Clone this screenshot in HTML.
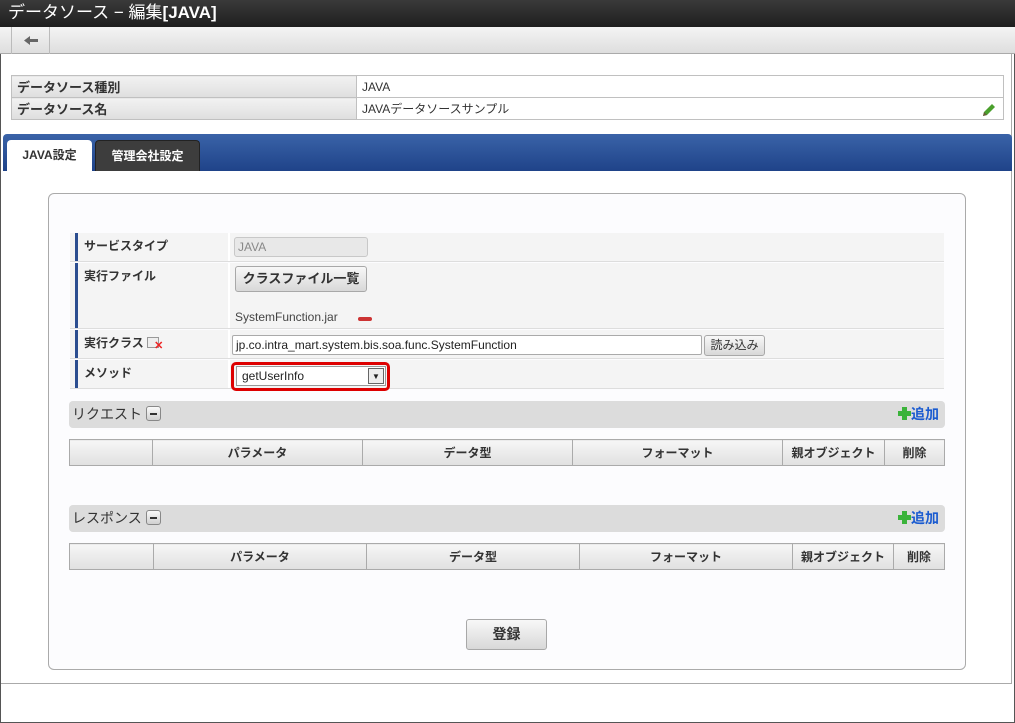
<!DOCTYPE html>
<html><head><meta charset="utf-8">
<style>
*{box-sizing:border-box;margin:0;padding:0}
body{width:1015px;height:723px;position:relative;background:#fff;font-family:"Liberation Sans","Noto Sans CJK JP",sans-serif;font-size:13px;color:#333;overflow:hidden}
.a{position:absolute}
.frame{left:0;top:0;width:1015px;height:723px;border:1px solid #555;border-top:none}
.title{left:0;top:0;width:1015px;height:27px;background:linear-gradient(#3a3a3a,#1e1e1e);color:#fff;font-size:17px;line-height:26px;padding-left:8px}
.tool{left:0;top:27px;width:1015px;height:27px;background:linear-gradient(#f4f4f4,#dedede);border-bottom:1px solid #aaa}
.back{left:11px;top:27px;width:39px;height:27px;border-left:1px solid #bbb;border-right:1px solid #bbb}
.inner{left:1px;top:54px;width:1011px;height:630px;border-right:1px solid #aaa;border-bottom:1px solid #aaa}
table{border-collapse:collapse}
.info{left:11px;top:75px;width:993px}
.info td{border:1px solid #c0c0c0;height:22px;padding:0 5px;font-size:13px}
.info td.l{background:linear-gradient(#f2f2f2,#dedede);width:345px;font-weight:bold;color:#333}
.info td.v{color:#333;font-size:12px}
.tabbar{left:3px;top:134px;width:1009px;height:37px;background:linear-gradient(#3a63a8,#1f4389);border-radius:4px 4px 0 0}
.tab1{left:7px;top:140px;width:85px;height:31px;background:#fff;border-radius:4px 4px 0 0;text-align:center;line-height:31px;font-size:12px;font-weight:bold;color:#333}
.tab2{left:95px;top:140px;width:105px;height:31px;background:#3d3d3d;border:1px solid #222;border-bottom:none;border-radius:4px 4px 0 0;text-align:center;line-height:30px;font-size:12px;font-weight:bold;color:#fff}
.panel{left:48px;top:193px;width:918px;height:477px;border:1px solid #aaa;border-radius:6px;background:#fcfcfe}
.row{left:70px;width:874px;background:#f4f4f4;border-bottom:1px solid #ddd}
.lab{position:absolute;left:5px;top:0;bottom:0;width:153px;border-left:3px solid #2b4d8f;padding:4px 0 0 6px;font-weight:bold;font-size:12px;color:#333}
.sep{position:absolute;left:158px;top:0;bottom:0;width:2px;background:#fff}
.btn{background:linear-gradient(#f8f8f8,#d8d8d8);border:1px solid #a8a8a8;border-radius:3px;text-align:center;color:#333}
.hdr{left:69px;width:876px;height:27px;background:#dcdcdc;border-radius:4px;font-size:14px;line-height:27px;padding-left:3px;color:#333}
.minus{display:inline-block;width:15px;height:15px;border:1px solid #888;border-radius:3px;background:linear-gradient(#fafafa,#d0d0d0);vertical-align:-2px;margin-left:4px;position:relative}
.minus:after{content:"";position:absolute;left:3px;top:6px;width:7px;height:2px;background:#333}
.add{position:absolute;right:6px;top:0;color:#1a5bd0;font-size:14px;font-weight:bold}
.plus{display:inline-block;width:13px;height:13px;position:relative;vertical-align:-1px}
.plus:before{content:"";position:absolute;left:4px;top:0;width:5px;height:13px;background:#3bb33b}
.plus:after{content:"";position:absolute;left:0;top:4px;width:13px;height:5px;background:#3bb33b}
.grid{left:69px;width:876px}
.grid td{border:1px solid #aaa;height:26px;background:linear-gradient(#f6f6f6,#e0e0e0);text-align:center;font-weight:bold;font-size:12px;color:#333}
</style></head><body>
<div class="a frame"></div>
<div class="a title">データソース − 編集<b>[JAVA]</b></div>
<div class="a tool"></div>
<div class="a back"><svg width="39" height="27"><path d="M12 13.5 L18 9 V12 H26 V15 H18 V18 Z" fill="#666"/></svg></div>
<div class="a inner"></div>
<table class="a info"><tr><td class="l">データソース種別</td><td class="v">JAVA</td></tr>
<tr><td class="l">データソース名</td><td class="v">JAVAデータソースサンプル<svg style="position:absolute;right:7px;top:26px" width="16" height="16"><path d="M2 14 L3 10 L11 2 L14 5 L6 13 Z" fill="#4aa02c"/><path d="M2 14 L3 10 L6 13Z" fill="#6a5a3a"/></svg></td></tr></table>
<div class="a tabbar"></div>
<div class="a tab1">JAVA設定</div>
<div class="a tab2">管理会社設定</div>
<div class="a panel"></div>

<div class="a row" style="top:233px;height:29px"><div class="lab">サービスタイプ</div><div class="sep"></div>
<div class="a" style="left:164px;top:4px;width:134px;height:20px;border:1px solid #c8c8c8;border-radius:3px;background:#e8e8e8;color:#888;font-size:12px;line-height:18px;padding-left:3px">JAVA</div></div>
<div class="a row" style="top:263px;height:66px"><div class="lab">実行ファイル</div><div class="sep"></div>
<div class="a btn" style="left:165px;top:3px;width:132px;height:26px;line-height:24px;font-size:13px;font-weight:bold">クラスファイル一覧</div>
<div class="a" style="left:165px;top:47px;font-size:12px;color:#444">SystemFunction.jar</div>
<div class="a" style="left:288px;top:54px;width:14px;height:4px;background:#c33;border-radius:2px"></div></div>
<div class="a row" style="top:330px;height:29px"><div class="lab">実行クラス <span style="display:inline-block;width:12px;height:11px;border:1px solid #999;background:#eee;vertical-align:-1px;position:relative"><span style="position:absolute;left:6px;top:3px;color:#e22;font-size:11px;line-height:10px">✕</span></span></div><div class="sep"></div>
<div class="a" style="left:162px;top:5px;width:470px;height:20px;border:1px solid #aaa;border-radius:2px;background:#fff;font-size:12px;line-height:18px;padding-left:3px;color:#222">jp.co.intra_mart.system.bis.soa.func.SystemFunction</div>
<div class="a btn" style="left:634px;top:5px;width:61px;height:21px;line-height:19px;font-size:12px">読み込み</div></div>
<div class="a row" style="top:360px;height:29px"><div class="lab">メソッド</div><div class="sep"></div>
<div class="a" style="left:161px;top:2px;width:159px;height:29px;border:3px solid #d00;border-radius:5px"></div>
<div class="a" style="left:166px;top:6px;width:150px;height:20px;border:1px solid #999;background:#fff;font-size:12px;line-height:18px;padding-left:5px;color:#222">getUserInfo<span style="position:absolute;right:1px;top:1px;width:16px;height:16px;border:1px solid #666;background:#eee;font-size:8px;line-height:15px;text-align:center">▼</span></div></div>

<div class="a hdr" style="top:401px">リクエスト<span class="minus"></span><span class="add"><span class="plus"></span>追加</span></div>
<table class="a grid" style="top:439px"><tr><td style="width:83px"></td><td style="width:210px">パラメータ</td><td style="width:210px">データ型</td><td style="width:210px">フォーマット</td><td style="width:102px">親オブジェクト</td><td>削除</td></tr></table>
<div class="a hdr" style="top:505px">レスポンス<span class="minus"></span><span class="add"><span class="plus"></span>追加</span></div>
<table class="a grid" style="top:543px"><tr><td style="width:84px"></td><td style="width:213px">パラメータ</td><td style="width:213px">データ型</td><td style="width:213px">フォーマット</td><td style="width:101px">親オブジェクト</td><td>削除</td></tr></table>
<div class="a btn" style="left:466px;top:619px;width:81px;height:31px;line-height:29px;font-size:14px;font-weight:bold">登録</div>
</body></html>
